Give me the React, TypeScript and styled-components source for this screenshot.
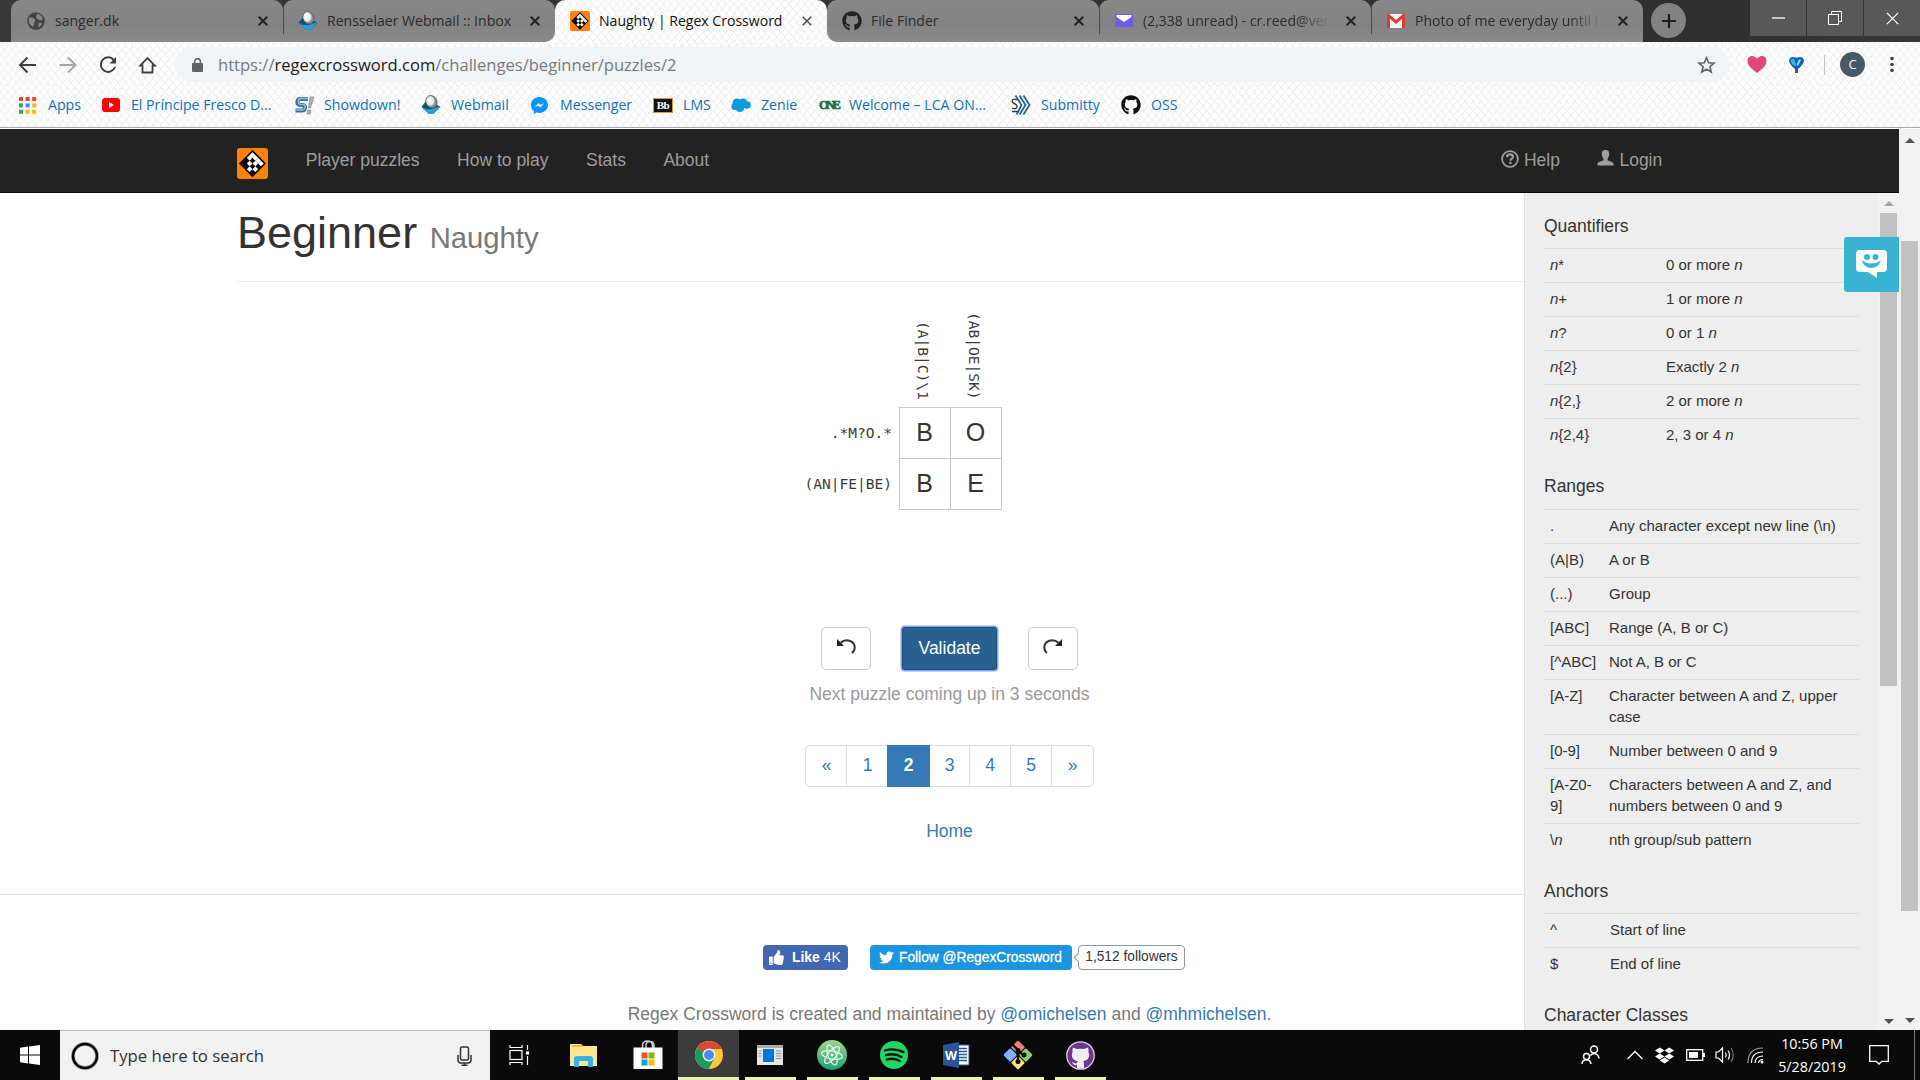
import React from "react";
import styled, { createGlobalStyle, css } from "styled-components";
import { FaDropbox, FaGithub, FaThumbsUp, FaTwitter } from "react-icons/fa";

const sans = `"Liberation Sans", Arial, sans-serif`;
const ui = `"Open Sans", "Noto Sans", sans-serif`;
const mono = `"DejaVu Sans Mono", monospace`;
const link = "#337ab7";

const Global = createGlobalStyle`
  * { box-sizing: border-box; }
  body { margin: 0; background: #fff; overflow: hidden; }
  svg { display: block; flex: none; }
`;

const Screen = styled.div`
  width: 1920px;
  height: 1080px;
  display: flex;
  flex-direction: column;
  overflow: hidden;
  font-family: ${sans};
  color: #333;
`;

/* ---------- browser frame ---------- */

const hatch = css`
  background-color: #fcfcfc;
  background-image: repeating-linear-gradient(50deg, transparent 0 5px, #f0f0f0 5px 6px),
    repeating-linear-gradient(-50deg, transparent 0 5px, #f0f0f0 5px 6px);
`;

const TabStrip = styled.div`
  height: 42px;
  flex: none;
  display: flex;
  padding-left: 11px;
  background: linear-gradient(90deg, #393939, #2f2f2f 1700px, #363636);
`;

const Tab = styled.div<{ $active?: boolean; $sep?: boolean; $round?: string }>`
  position: relative;
  width: 272px;
  height: 42px;
  display: flex;
  align-items: center;
  padding: 0 8px 7px 15px;
  border-radius: ${(p) => p.$round ?? "10px 10px 0 0"};
  font: 14.05px/20px ${ui};
  color: ${(p) => (p.$active ? "#111" : "#2b2b2b")};
  ${(p) => (p.$active ? hatch : "background: linear-gradient(#888, #838383 60%, #8a8a8a);")}
  ${(p) =>
    p.$sep &&
    css`
      &::before {
        content: "";
        position: absolute;
        left: 0;
        top: 9px;
        width: 1px;
        height: 25px;
        background: #4c4c4c;
      }
    `}
`;

const TabSlot = styled.div<{ $under?: boolean }>`
  background: ${(p) => (p.$under ? "linear-gradient(#333 50%, #fcfcfc 50%)" : "none")};
`;

const TabIcon = styled.span`
  width: 20px;
  display: flex;
  justify-content: center;
  margin-right: 9px;
  padding-top: 6px;
`;

const TabTitle = styled.span<{ $fade?: boolean }>`
  width: 188px;
  overflow: hidden;
  white-space: nowrap;
  padding-top: 6px;
  ${(p) => p.$fade && "mask-image: linear-gradient(90deg, #000 82%, transparent);"}
`;

const TabClose = styled.span`
  padding: 7px 0 0 15px;
`;

const NewTab = styled.div`
  width: 35px;
  height: 35px;
  margin: 3px 0 0 8px;
  border-radius: 50%;
  background: #828282;
  display: grid;
  place-items: center;
`;

const WindowButtons = styled.div`
  margin-left: auto;
  display: flex;
  gap: 1px;
  height: 36px;
`;

const WindowButton = styled.div`
  width: 56px;
  background: #585858;
  display: grid;
  place-items: center;
`;

const BrowserBars = styled.div`
  height: 87px;
  flex: none;
  border-bottom: 1px solid #fff;
  box-shadow: inset 0 -1px 0 #a5a5a5;
  ${hatch}
`;

const Toolbar = styled.div`
  height: 45px;
  display: flex;
  align-items: center;
  padding: 0 18px;
`;

const NavIcons = styled.div`
  display: flex;
  gap: 20px;
  width: 157px;
  align-items: center;
`;

const AddressBar = styled.div`
  width: 1554px;
  height: 35px;
  border-radius: 18px;
  background: #f1f3f4;
  display: flex;
  align-items: center;
  padding: 0 8px 0 17px;
`;

const Url = styled.span`
  margin-left: 15px;
  flex: 1;
  font: 16.57px/24px ${ui};
  color: #757a7f;
  b { font-weight: 400; color: #202124; }
`;

const Extensions = styled.div`
  display: flex;
  align-items: center;
  margin-left: 18px;
`;

const Balloon = styled.svg`
  margin-left: 20px;
`;

const ToolDivider = styled.span`
  width: 1px;
  height: 20px;
  background: #c4c4c4;
  margin: 0 15px 0 18px;
`;

const Avatar = styled.span`
  width: 25px;
  height: 25px;
  border-radius: 50%;
  background: #455a64;
  color: #fff;
  display: grid;
  place-items: center;
  font: 13px/1 ${ui};
  margin-right: 25px;
`;

const Bookmarks = styled.div`
  display: flex;
  height: 36px;
  align-items: center;
  padding-left: 19px;
`;

const Bookmark = styled.div<{ $w: number; $gap: number }>`
  width: ${(p) => p.$w}px;
  display: flex;
  align-items: center;
  gap: ${(p) => p.$gap}px;
  white-space: nowrap;
  font: 14.15px/20px ${ui};
  color: #0f73b5;
`;

const BbBadge = styled.span`
  width: 20px;
  height: 15px;
  background: #111;
  border: 1px solid #c9a33a;
  color: #fff;
  font: bold 11px/13px "Liberation Serif", serif;
  letter-spacing: -0.5px;
  text-align: center;
`;

const OneBadge = styled.span`
  width: 20px;
  font: bold 12.5px/14px "Liberation Serif", serif;
  letter-spacing: -2.6px;
  color: #1d7048;
  -webkit-text-stroke: 0.6px #1d7048;
`;

/* ---------- page ---------- */

const Viewport = styled.div`
  height: 901px;
  flex: none;
  display: flex;
`;

const Page = styled.div`
  width: 1899px;
  display: flex;
  flex-direction: column;
`;

const Navbar = styled.nav`
  height: 64px;
  flex: none;
  background: #222;
  border-bottom: 1px solid #080808;
  display: flex;
  padding-left: 237px;
  font-size: 17.5px;
  line-height: 25px;
  color: #9d9d9d;
`;

const Logo = styled.div`
  padding-top: 19px;
  margin-right: 19px;
`;

const NavLink = styled.a`
  padding: 19px 18.75px 0;
  display: flex;
  gap: 5px;
`;

const NavGlyph = styled.svg`
  margin-top: 2px;
`;

const NavRight = styled.div`
  display: flex;
  margin-left: auto;
  padding-right: 218px;
`;

const Body = styled.div`
  flex: 1;
  min-height: 0;
  display: flex;
`;

const Main = styled.main`
  width: 1524px;
  overflow: hidden;
  font-size: 17.5px;
  line-height: 25px;
`;

const PageHeader = styled.h1`
  margin: 0 0 0 237px;
  height: 89px;
  padding-top: 15px;
  border-bottom: 1px solid #eee;
  font-weight: 400;
  font-size: 45px;
  line-height: 49.5px;
  small { font-size: 29.25px; color: #777; }
`;

const Centered = styled.div<{ $h: number; $shift?: number }>`
  height: ${(p) => p.$h}px;
  padding-left: ${(p) => 375 + (p.$shift ?? 0)}px;
  display: flex;
  justify-content: center;
`;

const Puzzle = styled.div`
  display: grid;
  grid-template-columns: 899px 103px;
  grid-template-rows: 125px 103px;
  margin-bottom: 117px;
  font: 14.55px/20px ${mono};
  color: #3a3a3a;
`;

const ColumnClues = styled.div`
  grid-column: 2;
  display: flex;
  align-items: flex-end;
  padding: 0 0 7px 14px;
  gap: 31px;
`;

const ColumnClue = styled.span`
  writing-mode: vertical-rl;
  white-space: nowrap;
`;

const RowClues = styled.div`
  display: flex;
  flex-direction: column;
  align-items: flex-end;
  padding-right: 7px;
  line-height: 51px;
`;

const Board = styled.div`
  display: grid;
  grid-template-columns: 50px 50px;
  grid-template-rows: 50px 50px;
  gap: 1px;
  padding: 1px;
  background: #c8c8c8;
`;

const Cell = styled.div`
  background: #fff;
  padding-right: 1px;
  text-align: center;
  font: 25px/49px ${sans};
  color: #333;
`;

const Button = styled.button<{ $primary?: boolean }>`
  width: ${(p) => (p.$primary ? 95 : 50)}px;
  height: 43px;
  padding: 0 0 ${(p) => (p.$primary ? 0 : 5)}px;
  border: 1px solid ${(p) => (p.$primary ? "#204d74" : "#ccc")};
  border-radius: ${(p) => (p.$primary ? 3 : 5)}px;
  background: ${(p) => (p.$primary ? "#286090" : "#fff")};
  color: ${(p) => (p.$primary ? "#fff" : "#333")};
  font: 17.5px/25px ${sans};
  display: grid;
  place-items: center;
  ${(p) => p.$primary && "margin: 0 31px; box-shadow: 0 0 0 1.5px #7aa9f8;"}
`;

const Muted = styled.span`
  color: #999;
`;

const Pagination = styled.div`
  display: flex;
  width: 289px;
  height: 42px;
  border: 1px solid #ddd;
  border-radius: 5px;
  color: ${link};
`;

const PageLink = styled.a<{ $w: number; $active?: boolean; $plain?: boolean }>`
  width: ${(p) => p.$w}px;
  text-align: center;
  line-height: 39px;
  border-left: ${(p) => (p.$plain ? 0 : 1)}px solid #ddd;
  &:nth-child(-n + 2) { padding-left: 1px; }
  ${(p) => p.$active && `background: ${link}; color: #fff; font-weight: 700; margin: -1px 0; line-height: 41px;`}
`;

const Anchor = styled.a`
  color: ${link};
`;

const Rule = styled.div`
  height: 1px;
  background: #e6e6e6;
  margin-bottom: 50px;
`;

const LikeButton = styled.div`
  width: 85px;
  height: 25px;
  border-radius: 4px;
  background: #4267b2;
  color: #fff;
  font: 13.9px/23px ${sans};
  display: flex;
  align-items: center;
  gap: 8px;
  padding-left: 6px;
  white-space: nowrap;
`;

const FollowButton = styled.div`
  width: 202px;
  height: 25px;
  margin: 0 6px 0 22px;
  border-radius: 4px;
  background: #1b95e0;
  color: #fff;
  font: 13.75px/23px ${sans};
  display: flex;
  align-items: center;
  gap: 5px;
  padding-left: 9px;
  white-space: nowrap;
  -webkit-text-stroke: 0.3px #fff;
`;

const Followers = styled.div`
  position: relative;
  width: 107px;
  height: 25px;
  border: 1px solid #8899a6;
  border-radius: 4px;
  font: 13.75px/22px ${sans};
  text-align: center;
  &::before {
    content: "";
    position: absolute;
    left: -4px;
    top: 8px;
    width: 6px;
    height: 6px;
    background: #fff;
    border: solid #8899a6;
    border-width: 0 0 1px 1px;
    transform: rotate(45deg);
  }
`;

const Credits = styled.span`
  color: #777;
`;

/* ---------- reference sidebar ---------- */

const Sidebar = styled.aside`
  position: relative;
  width: 375px;
  background: #eee;
  border-left: 1px solid #e2e2e2;
  display: flex;
  justify-content: space-between;
  overflow: hidden;
`;

const SideContent = styled.div`
  width: 334px;
  padding-left: 19px;
`;

const SideTitle = styled.h4<{ $top: number; $bottom: number }>`
  margin: 0;
  padding: ${(p) => p.$top}px 0 ${(p) => p.$bottom}px;
  font-weight: 400;
  font-size: 17.5px;
  line-height: 19px;
`;

const SideRow = styled.div<{ $col: number }>`
  display: grid;
  grid-template-columns: ${(p) => p.$col}px 1fr;
  border-top: 1px solid #ddd;
  padding: 5px 0 7px 6px;
  font-size: 15px;
  line-height: 21px;
`;

const SideKey = styled.span`
  padding-right: 10px;
`;

const ScrollTrack = styled.div`
  width: 21px;
  background: #f1f1f1;
  display: flex;
  flex-direction: column;
  align-items: center;
`;

const ScrollThumb = styled.div<{ $top: number; $h: number }>`
  width: 17px;
  height: ${(p) => p.$h}px;
  margin-top: ${(p) => p.$top}px;
  background: #c1c1c1;
`;

const ScrollArrow = styled.div<{ $down?: boolean; $color: string; $top: number }>`
  margin-top: ${(p) => p.$top}px;
  border: 5px solid transparent;
  ${(p) =>
    p.$down
      ? `border-top-color: ${p.$color}; border-bottom: 0; margin-top: auto; margin-bottom: ${p.$top}px;`
      : `border-bottom-color: ${p.$color}; border-top: 0;`}
`;

const ChatBadge = styled.div`
  position: absolute;
  right: 0;
  top: 44px;
  width: 55px;
  height: 55px;
  padding-bottom: 1px;
  background: #38b4d0;
  border-radius: 3px 0 0 3px;
  display: grid;
  place-items: center;
`;

/* ---------- taskbar ---------- */

const Taskbar = styled.div`
  height: 50px;
  flex: none;
  background: #0a0a0a;
  display: flex;
  color: #fff;
`;

const StartButton = styled.div`
  width: 60px;
  display: grid;
  place-items: center;
`;

const SearchBox = styled.div`
  width: 430px;
  background: #f1f1f1;
  border-top: 1px solid #b8b8b8;
  display: flex;
  align-items: center;
  padding: 0 18px 0 11px;
  font: 16.75px/24px ${ui};
  color: #333;
`;

const SearchText = styled.span`
  flex: 1;
  margin-left: 11px;
`;

const TaskItem = styled.div<{ $w?: number; $state?: "open" | "active" }>`
  width: ${(p) => p.$w ?? 62}px;
  height: 50px;
  display: grid;
  place-items: center;
  background: ${(p) => (p.$state === "active" ? "#3c3c3c" : "none")};
  ${(p) =>
    p.$state &&
    css`
      background-image: linear-gradient(#e6f4ac, #e6f4ac);
      background-size: ${p.$state === "active" ? 61 : 51}px 3px;
      background-position: bottom center;
      background-repeat: no-repeat;
    `}
`;

const Tray = styled.div`
  margin-left: auto;
  display: flex;
  align-items: center;
`;

const TrayIcon = styled.span<{ $w: number }>`
  width: ${(p) => p.$w}px;
  display: flex;
  justify-content: center;
`;

const Clock = styled.div`
  width: 74px;
  text-align: center;
  white-space: nowrap;
  font: 14.3px/23px ${ui};
`;

const Notifications = styled.span`
  width: 65px;
  padding-left: 20px;
`;

const ShowDesktop = styled.span`
  width: 6px;
  height: 50px;
  border-left: 1px solid #777;
`;

/* ---------- drawings ---------- */

const Cross = ({ s = 10, w = 2, c = "#222" }) => (
  <svg width={s} height={s} viewBox="0 0 10 10"><path d="M.7.7l8.6 8.6M9.3.7L.7 9.3" stroke={c} strokeWidth={w} /></svg>
);

const RegexLogo = ({ s }: { s: number }) => (
  <svg width={s} height={s} viewBox="0 0 31 31">
    <rect width="31" height="31" rx="3" fill="#ff8300" />
    <path d="M15.5 1.8L29 15.5 15.5 29.200 2 15.5z" fill="#0a0a0a" />
    <g transform="translate(15.5 15.5) rotate(45)" fill="#fff">
      <rect x="-8" y="-8" width="4" height="4" /><rect x="-4" y="-8" width="4" height="4" /><rect x="0" y="-8" width="4" height="4" /><rect x="4" y="-8" width="4" height="4" />
      <rect x="-8" y="-4" width="4" height="4" /><rect x="0" y="-4" width="4" height="4" />
      <rect x="-4" y="0" width="4" height="4" /><rect x="4" y="0" width="4" height="4" />
      <rect x="0" y="4" width="4" height="4" />
    </g>
  </svg>
);

const Globe = () => (
  <svg width="18" height="18" viewBox="0 0 18 18">
    <circle cx="9" cy="9" r="8.800" fill="#444" />
    <path d="M2 6c3-1 5 0 6 2 1 1-1 2-1 4l-1 3C3 13 1 10 2 6zM10 2c3 0 5 2 6 5-2 2-4 1-5 0s-2-1-2-2zM12 11l3 0c0 2-2 4-4 4z" fill="#888" />
  </svg>
);

const MailDrop = () => (
  <svg width="20" height="20" viewBox="0 0 20 20">
    <defs><radialGradient id="dome" cx=".4" cy=".35"><stop stopColor="#fff" /><stop offset=".7" stopColor="#e3e7e9" /><stop offset="1" stopColor="#858c90" /></radialGradient></defs>
    <path d="M.5 12L5 6l14.500 5.500L13 18.500 8 19z" fill="#0d4f7b" />
    <path d="M.5 11.500q5 3.500 10.500 2.500L19.500 11 13 18.500 8 19z" fill="#2aa0d2" />
    <ellipse cx="10.500" cy="7" rx="5.400" ry="6.400" fill="url(#dome)" stroke="#555c60" strokeWidth=".8" transform="rotate(-25 10 7)" />
  </svg>
);

const Envelope = () => (
  <svg width="18" height="13" viewBox="0 0 18 13">
    <rect width="18" height="13" rx="1.500" fill="#6d5cf0" /><path d="M1.500 1h15v2L9 8 1.500 3z" fill="#fff" />
  </svg>
);

const Gmail = () => (
  <svg width="18" height="14" viewBox="0 0 18 14">
    <rect width="18" height="14" rx="1.500" fill="#f4f4f4" /><path d="M1.500 14V1.500L9 8l7.500-6.500V14" fill="none" stroke="#da3f34" strokeWidth="3" />
  </svg>
);

const stroke = { fill: "none", stroke: "#3c4043", strokeWidth: 2 };

const AppsGrid = () => (
  <svg width="18" height="17" viewBox="0 0 18 17">
    {["#ea4335", "#ea4335", "#ea4335", "#34a853", "#4285f4", "#fbbc05", "#34a853", "#fbbc05", "#fbbc05"].map((c, i) => (
      <rect key={i} x={(i % 3) * 6.6} y={Math.floor(i / 3) * 6.4} width="4" height="4" fill={c} />
    ))}
  </svg>
);

const YouTube = () => (
  <svg width="18" height="14" viewBox="0 0 18 14"><rect width="18" height="14" rx="3" fill="#f00" /><path d="M7 4l5 3-5 3z" fill="#fff" /></svg>
);

const Showdown = () => (
  <svg width="20" height="19" viewBox="0 0 20 19">
    <path d="M13 3H5.500C1.500 3 1.500 9 5 9h3c3 0 2.500 5.500-1 5.500H.5" fill="none" stroke="#3a6f9c" strokeWidth="4.200" />
    <path d="M13 2.500H5.500C2.500 3 2.500 8 5 8.500h3.500c3 1 2 5-1 5.500H1" fill="none" stroke="#8dbcdf" strokeWidth="1.400" />
    <path d="M15 1h4l-3.500 11h-2zM13 14h3l-1 4h-3z" fill="#a9b4bd" stroke="#6b8299" strokeWidth=".6" />
  </svg>
);

const MessengerIcon = () => (
  <svg width="17" height="17" viewBox="0 0 17 17">
    <path d="M8.500 0C3.700 0 0 3.500 0 8c0 2.500 1 4.500 2.800 6v3l2.800-1.500c1 .3 1.900.4 2.900.4 4.800 0 8.500-3.500 8.500-7.900S13.300 0 8.500 0z" fill="#0a94ff" />
    <path d="M3.500 10.500L7.500 6l2 2 3.800-2-4 4.500-2-2z" fill="#fff" />
  </svg>
);

const Cloud = () => (
  <svg width="20" height="14" viewBox="0 0 20 14">
    <g fill="#0a9bdc"><circle cx="6" cy="5" r="4.500" /><circle cx="12" cy="4.500" r="4" /><circle cx="16" cy="7" r="3.800" /><circle cx="4" cy="8.500" r="3.600" /><circle cx="9" cy="10" r="4" /><rect x="4" y="4" width="11" height="6" /></g>
  </svg>
);

const SubmittyIcon = () => (
  <svg width="20" height="20" viewBox="0 0 20 20" fill="none">
    <path d="M6 5C3 3 .5 5 1.500 7s4 2 4.500 4-2 3.500-5 2M1 16.500h7" stroke="#333" strokeWidth="1.300" />
    <path d="M4.500.5l6 9.500-3 6-2 3.500M8.500.5l6 9.500-6 9.500M12.500.5l6 9.500-6 9.500" stroke="#1b5f91" strokeWidth="1.700" />
  </svg>
);

const Undo = ({ flip }: { flip?: boolean }) => (
  <svg width="20" height="19" viewBox="0 0 20 19">
    <g transform={flip ? "translate(20 0) scale(-1 1)" : undefined}>
      <path d="M4.500 5.800C10 .5 18.700 4 18.700 10.500c0 2.500-1 4.200-2.700 5.500" fill="none" stroke="#333" strokeWidth="2" />
      <path d="M1 2v7h7z" fill="#222" />
    </g>
  </svg>
);

const ChatFace = () => (
  <svg width="31" height="28" viewBox="0 0 31 28">
    <path d="M4 0h23q4 0 4 4v14q0 4-4 4h-6v6l-9-6H4q-4 0-4-4V4q0-4 4-4z" fill="#fff" />
    <circle cx="11" cy="7" r="3" fill="#38b4d0" /><circle cx="19.500" cy="7" r="3" fill="#38b4d0" />
    <path d="M5.500 10.500q9.700 6 19.500 0-3 7.500-9.700 7.500T5.500 10.500z" fill="#38b4d0" />
  </svg>
);

const WindowsLogo = () => (
  <svg width="20" height="20" viewBox="0 0 20 20" fill="#fff">
    <path d="M0 2.700L8 1.500v8H0zM9 1.400L20 0v9.500H9zM0 10.500h8v8L0 17.300zM9 10.500h11V20L9 18.600z" />
  </svg>
);

const Chrome = () => (
  <svg width="28" height="28" viewBox="0 0 28 28">
    <circle cx="14" cy="14" r="14" fill="#fcc93b" />
    <path d="M14 14L1.900 7A14 14 0 0 1 26.500 8H14z" fill="#d9463a" />
    <path d="M1.900 7A14 14 0 0 0 13.500 28l6-10.500-5.500-3.500z" fill="#1c9c5b" />
    <circle cx="14" cy="14" r="6.400" fill="#f3f3f3" /><circle cx="14" cy="14" r="5" fill="#4a8af4" />
  </svg>
);

const Atom = () => (
  <svg width="30" height="30" viewBox="0 0 30 30">
    <defs><linearGradient id="atom" x2="0" y2="1"><stop stopColor="#a6d68b" /><stop offset="1" stopColor="#12a37a" /></linearGradient></defs>
    <circle cx="15" cy="15" r="15" fill="url(#atom)" />
    <g fill="none" stroke="#e8f6ec" strokeWidth="1.200">
      {[10, 70, 130].map((a) => <ellipse key={a} cx="15" cy="15" rx="10.500" ry="4" transform={`rotate(${a} 15 15)`} />)}
    </g>
    <circle cx="15" cy="15" r="1.500" fill="#fff" />
  </svg>
);

const Spotify = () => (
  <svg width="28" height="28" viewBox="0 0 28 28">
    <circle cx="14" cy="14" r="14" fill="#1ed760" />
    <path d="M5 9.500q9-3 18.500 1.500M6 14.200q8-2.500 15.500 1.700M6.800 18.500q7-2 13 1.500" fill="none" stroke="#111" strokeWidth="2.300" strokeLinecap="round" />
  </svg>
);

const Word = () => (
  <svg width="27" height="26" viewBox="0 0 27 26">
    <rect x="13" y="3" width="13" height="20" fill="#fff" stroke="#2a5699" />
    <path d="M15 6.500h9M15 9.500h9M15 12.500h9M15 15.500h9M15 18.500h9" stroke="#2a5699" strokeWidth="1.400" />
    <path d="M0 3l16-3v26L0 23z" fill="#2a5699" />
    <text x="2" y="18" fontFamily="Open Sans" fontWeight="700" fontSize="13" textLength="12" lengthAdjust="spacingAndGlyphs" fill="#fff">W</text>
  </svg>
);

const Git = () => (
  <svg width="30" height="30" viewBox="0 0 30 30">
    <g transform="translate(15 15) rotate(45)">
      <rect x="-10.500" y="-10.500" width="10" height="10" rx="1.500" fill="#f87b7b" />
      <rect x=".5" y="-10.500" width="10" height="10" rx="1.500" fill="#8bd25f" />
      <rect x="-10.500" y=".5" width="10" height="10" rx="1.500" fill="#82b1ff" />
      <rect x=".5" y=".5" width="10" height="10" rx="1.500" fill="#ffe27a" />
    </g>
    <path d="M9 4l6 6v12M15 10l6 6" stroke="#0a0a0a" strokeWidth="2.400" fill="none" />
    <circle cx="15" cy="10.500" r="2.500" /><circle cx="15" cy="21.500" r="2.500" /><circle cx="21" cy="15" r="2.500" />
  </svg>
);

const GitHubDesktop = () => (
  <svg width="29" height="29" viewBox="0 0 29 29">
    <circle cx="14.500" cy="14.500" r="13.700" fill="#6f3390" stroke="#ddd0e4" strokeWidth="1.300" />
    <path d="M7 6.500l4 1.500q3.500-.7 7 0l4-1.500q1 2.500.4 4.500c2 4 .3 8.500-5.200 9q.8 1 .8 3v4q-3.500 1.200-7 0v-3c-3 .6-4-1-5-3 2 .4 2.500 1.800 5 1.200q0-1.500.8-2.200C6.500 19.500 4.600 15 6.600 11Q6 9 7 6.500z" fill="#eee" />
  </svg>
);

/* ---------- data ---------- */

const bookmarks: [number, number, React.ReactNode, string][] = [
  [83, 11, <AppsGrid />, "Apps"],
  [193, 11, <YouTube />, "El Príncipe Fresco D..."],
  [126, 9, <Showdown />, "Showdown!"],
  [110, 10, <MailDrop />, "Webmail"],
  [122, 12, <MessengerIcon />, "Messenger"],
  [78, 10, <BbBadge>Bb</BbBadge>, "LMS"],
  [88, 10, <Cloud />, "Zenie"],
  [192, 10, <OneBadge>ONE</OneBadge>, "Welcome – LCA ON..."],
  [110, 10, <SubmittyIcon />, "Submitty"],
  [80, 10, <FaGithub size={20} color="#111" />, "OSS"],
];

const N = <i>n</i>;

const sections: { title: string; top: number; bottom: number; col: number; rows: [React.ReactNode, React.ReactNode][] }[] = [
  {
    title: "Quantifiers", top: 24, bottom: 12, col: 116,
    rows: [
      [<>{N}*</>, <>0 or more {N}</>],
      [<>{N}+</>, <>1 or more {N}</>],
      [<>{N}?</>, <>0 or 1 {N}</>],
      [<>{N}{"{2}"}</>, <>Exactly 2 {N}</>],
      [<>{N}{"{2,}"}</>, <>2 or more {N}</>],
      [<>{N}{"{2,4}"}</>, <>2, 3 or 4 {N}</>],
    ],
  },
  {
    title: "Ranges", top: 25, bottom: 13, col: 59,
    rows: [
      [".", "Any character except new line (\\n)"],
      ["(A|B)", "A or B"],
      ["(...)", "Group"],
      ["[ABC]", "Range (A, B or C)"],
      ["[^ABC]", "Not A, B or C"],
      ["[A-Z]", "Character between A and Z, upper case"],
      ["[0-9]", "Number between 0 and 9"],
      [<>[A-Z0-<br />9]</>, "Characters between A and Z, and numbers between 0 and 9"],
      [<>\{N}</>, "nth group/sub pattern"],
    ],
  },
  { title: "Anchors", top: 25, bottom: 12, col: 60, rows: [["^", "Start of line"], ["$", "End of line"]] },
  { title: "Character Classes", top: 25, bottom: 12, col: 60, rows: [] },
];

export default function App() {
  return (
    <Screen>
      <Global />
      <TabStrip>
        <TabSlot><Tab><TabIcon><Globe /></TabIcon><TabTitle>sanger.dk</TabTitle><TabClose><Cross /></TabClose></Tab></TabSlot>
        <TabSlot $under><Tab $sep $round="10px 10px 10px 0"><TabIcon><MailDrop /></TabIcon><TabTitle>Rensselaer Webmail :: Inbox</TabTitle><TabClose><Cross /></TabClose></Tab></TabSlot>
        <TabSlot><Tab $active><TabIcon><RegexLogo s={20} /></TabIcon><TabTitle>Naughty | Regex Crossword</TabTitle><TabClose><Cross w={1.6} c="#555" /></TabClose></Tab></TabSlot>
        <TabSlot $under><Tab $round="10px 10px 0 10px"><TabIcon><FaGithub size={20} color="#222" /></TabIcon><TabTitle>File Finder</TabTitle><TabClose><Cross /></TabClose></Tab></TabSlot>
        <TabSlot><Tab $sep><TabIcon><Envelope /></TabIcon><TabTitle $fade>(2,338 unread) - cr.reed@ver</TabTitle><TabClose><Cross /></TabClose></Tab></TabSlot>
        <TabSlot><Tab $sep><TabIcon><Gmail /></TabIcon><TabTitle $fade>Photo of me everyday until I</TabTitle><TabClose><Cross /></TabClose></Tab></TabSlot>
        <NewTab><svg width="16" height="16"><path d="M8 1v14M1 8h14" stroke="#1c1c1c" strokeWidth="2.200" /></svg></NewTab>
        <WindowButtons>
          <WindowButton><svg width="13" height="13"><path d="M0 6h13" stroke="#fff" strokeWidth="1.300" /></svg></WindowButton>
          <WindowButton><svg width="14" height="14"><path d="M.5 3.500h10v10H.5zM3.500 3V.5h10v10H11" fill="none" stroke="#fff" /></svg></WindowButton>
          <WindowButton><Cross s={13} w={1} c="#fff" /></WindowButton>
        </WindowButtons>
      </TabStrip>

      <BrowserBars>
        <Toolbar>
          <NavIcons>
            <svg width="20" height="18" viewBox="0 0 20 18"><path d="M9.500 1.500L2 9l7.500 7.500M2 9h16" {...stroke} /></svg>
            <svg width="20" height="18" viewBox="0 0 20 18"><path d="M10 1.500L17.500 9 10 16.500M17.500 9H1.500" {...stroke} stroke="#a5a5a5" /></svg>
            <svg width="20" height="18" viewBox="0 0 20 18"><path d="M15.800 4A7.300 7.300 0 1 0 17 11" {...stroke} /><path d="M18 1v6.500h-6.500z" fill="#3c4043" /></svg>
            <svg width="20" height="18" viewBox="0 0 20 18"><path d="M4.500 16.500V9.500H2.200L9.500 2l7.300 7.500h-2.300v7z" {...stroke} strokeWidth="1.800" /></svg>
          </NavIcons>
          <AddressBar>
            <svg width="11" height="14" viewBox="0 0 11 14"><rect y="5" width="11" height="9" rx="1" fill="#5f6368" /><path d="M2.700 6V3.500a2.800 2.800 0 0 1 5.600 0V6" fill="none" stroke="#5f6368" strokeWidth="1.500" /></svg>
            <Url>https://<b>regexcrossword.com</b>/challenges/beginner/puzzles/2</Url>
            <svg width="29" height="18" viewBox="0 0 29 18"><path d="M14.500 1.800l2.100 5 5.400.4-4.100 3.500 1.300 5.300-4.700-2.900L9.800 16l1.300-5.300L7 7.200l5.400-.4z" fill="none" stroke="#5f6368" strokeWidth="1.600" /></svg>
          </AddressBar>
          <Extensions>
            <svg width="20" height="17" viewBox="0 0 20 17"><path d="M10 17C5 13 .5 9.500.5 5 .5 0 7-2 10 3c3-5 9.500-3 9.500 2 0 4.500-4.500 8-9.500 12z" fill="#e0457b" /></svg>
            <Balloon width="19" height="18" viewBox="0 0 19 18">
              <path d="M2 4.500Q2.500 1 6 1q2.500 0 3.500 1 1-1 3.500-1 3.500 0 4 3.500-.5 4-6 8.500V17h-3v-4Q2.500 8.500 2 4.500z" fill="#0f63b5" />
              <path d="M3.500 4.500Q4.500 2 7 3l2 5-1 2.500Q4.500 8 3.500 4.500z" fill="#3fb1f0" />
              <path d="M9.500 9L12 3l2 1-3 6z" fill="#8fd6fa" />
            </Balloon>
            <ToolDivider />
            <Avatar>C</Avatar>
            <svg width="4" height="17"><g fill="#3c4043"><circle cx="2" cy="2.500" r="1.800" /><circle cx="2" cy="8.500" r="1.800" /><circle cx="2" cy="14.500" r="1.800" /></g></svg>
          </Extensions>
        </Toolbar>
        <Bookmarks>
          {bookmarks.map(([w, gap, icon, name]) => (
            <Bookmark key={name} $w={w} $gap={gap}>{icon}{name}</Bookmark>
          ))}
        </Bookmarks>
      </BrowserBars>

      <Viewport>
        <Page>
          <Navbar>
            <Logo><RegexLogo s={31} /></Logo>
            <NavLink>Player puzzles</NavLink>
            <NavLink>How to play</NavLink>
            <NavLink>Stats</NavLink>
            <NavLink>About</NavLink>
            <NavRight>
              <NavLink>
                <NavGlyph width="18" height="18" viewBox="0 0 18 18">
                  <circle cx="9" cy="9" r="7.900" fill="none" stroke="#9d9d9d" strokeWidth="1.800" />
                  <path d="M6 7.200C6 3.500 12 3.600 12 6.800c0 2-2.600 1.900-2.600 4" fill="none" stroke="#9d9d9d" strokeWidth="2.200" /><rect x="8.200" y="11.800" width="2.400" height="2.200" fill="#9d9d9d" />
                </NavGlyph>
                <span>Help</span>
              </NavLink>
              <NavLink>
                <NavGlyph width="17" height="16" viewBox="0 0 17 16">
                  <path d="M8.500 0c3 0 4 2 3.700 4.500-.2 2-1 3.500-1.700 4.200v1.500l5 2q1.200.6 1.200 3.300H.3q0-2.700 1.200-3.300l5-2V8.700C5.800 8 5 6.500 4.800 4.500 4.500 2 5.500 0 8.500 0z" fill="#9d9d9d" />
                </NavGlyph>
                <span>Login</span>
              </NavLink>
            </NavRight>
          </Navbar>
          <Body>
            <Main>
              <PageHeader>Beginner <small>Naughty</small></PageHeader>
              <Puzzle>
                <ColumnClues><ColumnClue>(A|B|C)\1</ColumnClue><ColumnClue>(AB|OE|SK)</ColumnClue></ColumnClues>
                <RowClues><span>.*M?O.*</span><span>(AN|FE|BE)</span></RowClues>
                <Board><Cell>B</Cell><Cell>O</Cell><Cell>B</Cell><Cell>E</Cell></Board>
              </Puzzle>
              <Centered $h={55}>
                <Button><Undo /></Button>
                <Button $primary>Validate</Button>
                <Button><Undo flip /></Button>
              </Centered>
              <Centered $h={63}><Muted>Next puzzle coming up in 3 seconds</Muted></Centered>
              <Centered $h={74}>
                <Pagination>
                  <PageLink $w={40} $plain>«</PageLink>
                  <PageLink $w={41}>1</PageLink>
                  <PageLink $w={43} $active $plain>2</PageLink>
                  <PageLink $w={39} $plain>3</PageLink>
                  <PageLink $w={41}>4</PageLink>
                  <PageLink $w={41}>5</PageLink>
                  <PageLink $w={42}>»</PageLink>
                </Pagination>
              </Centered>
              <Centered $h={75}><Anchor>Home</Anchor></Centered>
              <Rule />
              <Centered $h={57} $shift={49}>
                <LikeButton><FaThumbsUp size={15} /><span><b>Like</b> 4K</span></LikeButton>
                <FollowButton><FaTwitter size={15} />Follow @RegexCrossword</FollowButton>
                <Followers>1,512 followers</Followers>
              </Centered>
              <Centered $h={28}>
                <Credits>Regex Crossword is created and maintained by <Anchor>@omichelsen</Anchor> and <Anchor>@mhmichelsen</Anchor>.</Credits>
              </Centered>
            </Main>
            <Sidebar>
              <SideContent>
                {sections.map((s) => (
                  <React.Fragment key={s.title}>
                    <SideTitle $top={s.top} $bottom={s.bottom}>{s.title}</SideTitle>
                    {s.rows.map(([k, v], i) => (
                      <SideRow key={i} $col={s.col}><SideKey>{k}</SideKey><span>{v}</span></SideRow>
                    ))}
                  </React.Fragment>
                ))}
              </SideContent>
              <ScrollTrack>
                <ScrollArrow $color="#a3a3a3" $top={8} />
                <ScrollThumb $top={7} $h={473} />
                <ScrollArrow $down $color="#505050" $top={6} />
              </ScrollTrack>
              <ChatBadge><ChatFace /></ChatBadge>
            </Sidebar>
          </Body>
        </Page>
        <ScrollTrack>
          <ScrollArrow $color="#505050" $top={9} />
          <ScrollThumb $top={98} $h={670} />
          <ScrollArrow $down $color="#505050" $top={7} />
        </ScrollTrack>
      </Viewport>

      <Taskbar>
        <StartButton><WindowsLogo /></StartButton>
        <SearchBox>
          <svg width="28" height="28"><circle cx="14" cy="14" r="12" fill="none" stroke="#888" strokeWidth="3.600" /><circle cx="14" cy="14" r="12" fill="none" stroke="#000" strokeWidth="2.400" /></svg>
          <SearchText>Type here to search</SearchText>
          <svg width="15" height="20" viewBox="0 0 15 20" fill="none" stroke="#333" strokeWidth="1.500"><rect x="3.500" y="1" width="8" height="13" rx="1.500" /><path d="M1 9v5q0 3 3 3h7q3 0 3-3V9M7.500 17v2M4.500 19.200h6" /></svg>
        </SearchBox>
        <TaskItem $w={59}>
          <svg width="21" height="20" viewBox="0 0 21 20" fill="none" stroke="#fff" strokeWidth="1.200"><rect x="1" y="5.500" width="12" height="9" /><path d="M1 0v2.500h12V0M1 20v-2.500h12V20M18.500 0v5M18.500 11v9" /><rect x="17.500" y="7" width="2" height="2" fill="#fff" /></svg>
        </TaskItem>
        <TaskItem $w={68}>
          <svg width="27" height="23" viewBox="0 0 27 23"><path d="M0 1q0-1 1-1h10l2 2h14v20H0z" fill="#ffe68f" /><path d="M2 1h9l1.500 2H2z" fill="#f0b93e" /><path d="M4 23v-8q0-3 3-3h13q3 0 3 3v8h-5v-6H9v6z" fill="#3bb1e8" /></svg>
        </TaskItem>
        <TaskItem $w={61}>
          <svg width="30" height="30" viewBox="0 0 30 30"><path d="M9.500 8V6q0-5 5-5t5 5v2M13 8V5.500q0-4 4-4t4 4V8" fill="none" stroke="#ccc" strokeWidth="1.500" /><rect x=".5" y="7.500" width="29" height="21.500" fill="#fff" /><path d="M8.500 12.500h6v6h-6z" fill="#f25022" /><path d="M15.500 12.500h6v6h-6z" fill="#7fba00" /><path d="M8.500 19.500h6v6h-6z" fill="#00a4ef" /><path d="M15.500 19.500h6v6h-6z" fill="#ffb900" /></svg>
        </TaskItem>
        <TaskItem $w={61} $state="active"><Chrome /></TaskItem>
        <TaskItem $state="open">
          <svg width="26" height="20" viewBox="0 0 26 20"><rect width="26" height="20" fill="#e6e6e6" /><rect width="26" height="3" fill="#aaa" /><path d="M1.500 6h3M1.500 8.500h3M1.500 11h3M19 6h5.500M19 8.500h5.500M19 11h5.500M19 13.500h5.500" stroke="#999" /><rect x="6" y="4" width="11" height="13" fill="#0078d7" /></svg>
        </TaskItem>
        <TaskItem $state="open"><Atom /></TaskItem>
        <TaskItem $state="open"><Spotify /></TaskItem>
        <TaskItem $state="open"><Word /></TaskItem>
        <TaskItem $state="open"><Git /></TaskItem>
        <TaskItem $state="open"><GitHubDesktop /></TaskItem>
        <Tray>
          <TrayIcon $w={56}>
            <svg width="19" height="20" viewBox="0 0 19 20" fill="none" stroke="#fff" strokeWidth="1.500"><circle cx="13" cy="4.500" r="3.500" /><circle cx="5.500" cy="11.500" r="3" /><path d="M1 19q0-4 4.500-4.300 4.200.3 4.500 4.300M9.500 10.500q1.500-2 3.500-2 4.500.5 5 5" /></svg>
          </TrayIcon>
          <TrayIcon $w={34}><svg width="16" height="10"><path d="M.5 9L8 1.500 15.500 9" fill="none" stroke="#fff" strokeWidth="1.300" /></svg></TrayIcon>
          <TrayIcon $w={25}><FaDropbox size={19} /></TrayIcon>
          <TrayIcon $w={37}>
            <svg width="19" height="12"><rect x=".7" y=".7" width="16" height="10.600" fill="none" stroke="#fff" strokeWidth="1.300" /><rect x="3" y="3" width="9" height="6" fill="#fff" /><path d="M18 4v4" stroke="#fff" strokeWidth="2" /></svg>
          </TrayIcon>
          <TrayIcon $w={22}>
            <svg width="20" height="18" viewBox="0 0 20 18" fill="none" stroke="#fff" strokeWidth="1.200"><path d="M1 6h2.500L7.500 2v14l-4-4H1z" /><path d="M10.500 6.500q1.500 2.500 0 5M13 4.500q3 4.500 0 9" /><path d="M16 2q4.500 7 0 14" stroke="#777" /></svg>
          </TrayIcon>
          <TrayIcon $w={39}>
            <svg width="17" height="17" viewBox="0 0 17 17" fill="none" stroke="#fff" strokeWidth="1.200"><path d="M1 16Q1 1 16 1" stroke="#999" /><path d="M4.500 16Q4.500 5 16 5M8 16Q8.500 9 16 9M11.500 16q.5-3.500 4.500-3.500" /><circle cx="15" cy="15" r="1.500" fill="#fff" stroke="none" /></svg>
          </TrayIcon>
          <Clock>10:56 PM<br />5/28/2019</Clock>
          <Notifications>
            <svg width="20" height="20" viewBox="0 0 20 20"><path d="M.7.7h18.600v15.600h-6.500L10 19l-2.800-2.700H.7z" fill="none" stroke="#fff" strokeWidth="1.300" /></svg>
          </Notifications>
          <ShowDesktop />
        </Tray>
      </Taskbar>
    </Screen>
  );
}
